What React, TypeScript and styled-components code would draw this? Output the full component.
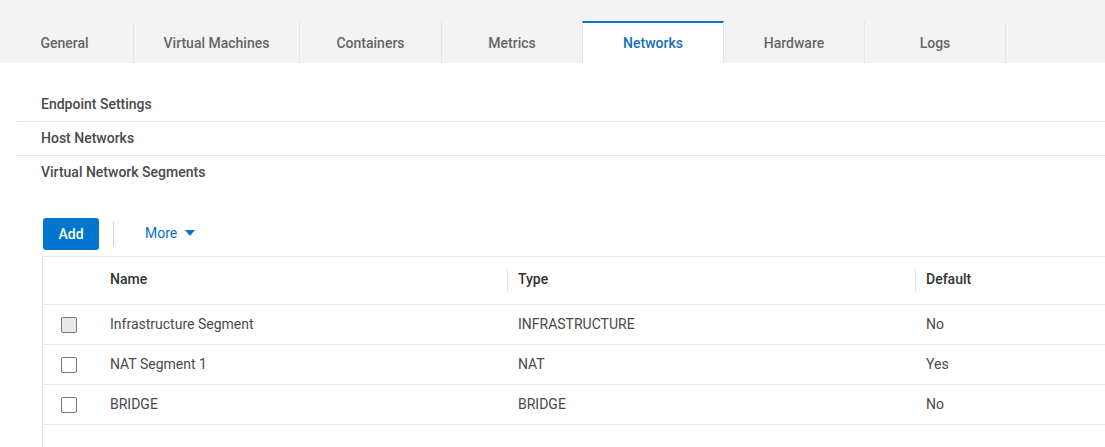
import React from "react";
import styled, { createGlobalStyle } from "styled-components";

const GlobalStyle = createGlobalStyle`
  html, body { margin: 0; padding: 0; background: #ffffff; }
  body { font-family: Roboto, "Liberation Sans", Arial, sans-serif; font-size: 14px; color: #444; overflow: hidden; }
  * { box-sizing: border-box; }
`;

const Page = styled.div`
  width: 1105px;
  min-height: 447px;
  background: #fff;
`;

const TabBar = styled.div`
  display: flex;
  align-items: flex-end;
  height: 63px;
  padding-top: 21px;
  background: #f3f3f3;
`;

const Tab = styled.div<{ $active?: boolean; $width: number; $shift?: number }>`
  width: ${(p) => p.$width}px;
  height: 42px;
  display: flex;
  align-items: center;
  justify-content: center;
  padding-right: ${(p) => p.$shift ?? 0}px;
  font-size: 14px;
  font-weight: 500;
  color: ${(p) => (p.$active ? "#1a6fb9" : "#666")};
  background: ${(p) => (p.$active ? "#fff" : "transparent")};
  border-top: 2px solid ${(p) => (p.$active ? "#0076ce" : "transparent")};
  border-right: 1px solid #e4e4e4;
  border-left: ${(p) => (p.$active ? "1px solid #e4e4e4" : "none")};
  margin-left: ${(p) => (p.$active ? "-1px" : "0")};
  cursor: pointer;
`;

const SubNav = styled.nav`
  display: flex;
  flex-direction: column;
  margin: 25px 0 0 17px;
`;

const SubNavItem = styled.div<{ $divider?: boolean }>`
  height: 34px;
  display: flex;
  align-items: center;
  padding: 0 0 2px 24px;
  font-size: 14px;
  font-weight: 500;
  color: #4a4a4a;
  border-bottom: ${(p) => (p.$divider ? "1px solid #e6e6e6" : "none")};
`;

const Content = styled.div`
  margin-top: 28px;
  padding-left: 42px;
`;

const Toolbar = styled.div`
  display: flex;
  align-items: center;
  height: 32px;
  padding-left: 1px;
  margin-bottom: 6px;
`;

const PrimaryButton = styled.button`
  width: 56px;
  height: 32px;
  border: none;
  border-radius: 3px;
  background: #0076ce;
  color: #fff;
  font-family: inherit;
  font-size: 14px;
  font-weight: 500;
  padding: 0 0 1px;
  cursor: pointer;
`;

const ToolbarDivider = styled.div`
  width: 1px;
  height: 24px;
  background: #d0d0d0;
  margin: 0 31px 0 14px;
`;

const LinkButton = styled.button`
  display: flex;
  align-items: center;
  gap: 8px;
  border: none;
  background: none;
  padding: 0 0 2px;
  color: #0672cb;
  font-family: inherit;
  font-size: 14px;
  cursor: pointer;
`;

const Table = styled.div`
  border-top: 1px solid #e6e6e6;
  border-left: 1px solid #e6e6e6;
`;

const Row = styled.div<{ $header?: boolean }>`
  display: grid;
  grid-template-columns: 56px 408px 408px 1fr;
  height: ${(p) => (p.$header ? "48px" : "40px")};
  border-bottom: 1px solid #e6e6e6;
  align-items: center;
`;

const Cell = styled.div<{ $header?: boolean; $sep?: boolean }>`
  display: flex;
  align-items: center;
  height: ${(p) => (p.$header ? "23px" : "100%")};
  padding: 0 0 ${(p) => (p.$header ? "3px" : "2px")} 10px;
  font-size: 14px;
  font-weight: ${(p) => (p.$header ? 500 : 400)};
  color: ${(p) => (p.$header ? "#333" : "#4a4a4a")};
  border-left: ${(p) => (p.$sep ? "1px solid #e6e6e6" : "1px solid transparent")};
  white-space: nowrap;
`;

const CheckCell = styled.div`
  display: flex;
  align-items: center;
  padding-left: 18px;
  height: 100%;
`;

const Checkbox = styled.span<{ $disabled?: boolean }>`
  width: 16px;
  height: 16px;
  border: 1px solid #777;
  border-radius: 2px;
  background: ${(p) => (p.$disabled ? "#e8e8e8" : "#fff")};
  display: inline-block;
`;

const tabs = [
  { label: "General", width: 134, shift: 4 },
  { label: "Virtual Machines", width: 166 },
  { label: "Containers", width: 142 },
  { label: "Metrics", width: 141 },
  { label: "Networks", width: 142, active: true },
  { label: "Hardware", width: 141 },
  { label: "Logs", width: 141 },
];

const rows = [
  { name: "Infrastructure Segment", type: "INFRASTRUCTURE", def: "No", disabled: true },
  { name: "NAT Segment 1", type: "NAT", def: "Yes" },
  { name: "BRIDGE", type: "BRIDGE", def: "No" },
];

export default function App() {
  return (
    <Page>
      <GlobalStyle />
      <TabBar>
        {tabs.map((t) => (
          <Tab key={t.label} $active={t.active} $width={t.width} $shift={t.shift}>
            {t.label}
          </Tab>
        ))}
      </TabBar>
      <SubNav>
        <SubNavItem $divider>Endpoint Settings</SubNavItem>
        <SubNavItem $divider>Host Networks</SubNavItem>
        <SubNavItem>Virtual Network Segments</SubNavItem>
      </SubNav>
      <Content>
        <Toolbar>
          <PrimaryButton>Add</PrimaryButton>
          <ToolbarDivider />
          <LinkButton>
            More
            <svg width="10" height="6" viewBox="0 0 10 6">
              <path d="M0 0 H10 L5 6 Z" fill="#0672cb" />
            </svg>
          </LinkButton>
        </Toolbar>
        <Table>
          <Row $header>
            <div />
            <Cell $header>Name</Cell>
            <Cell $header $sep>Type</Cell>
            <Cell $header $sep>Default</Cell>
          </Row>
          {rows.map((r) => (
            <Row key={r.name}>
              <CheckCell>
                <Checkbox $disabled={r.disabled} />
              </CheckCell>
              <Cell>{r.name}</Cell>
              <Cell>{r.type}</Cell>
              <Cell>{r.def}</Cell>
            </Row>
          ))}
          <Row />
        </Table>
      </Content>
    </Page>
  );
}
